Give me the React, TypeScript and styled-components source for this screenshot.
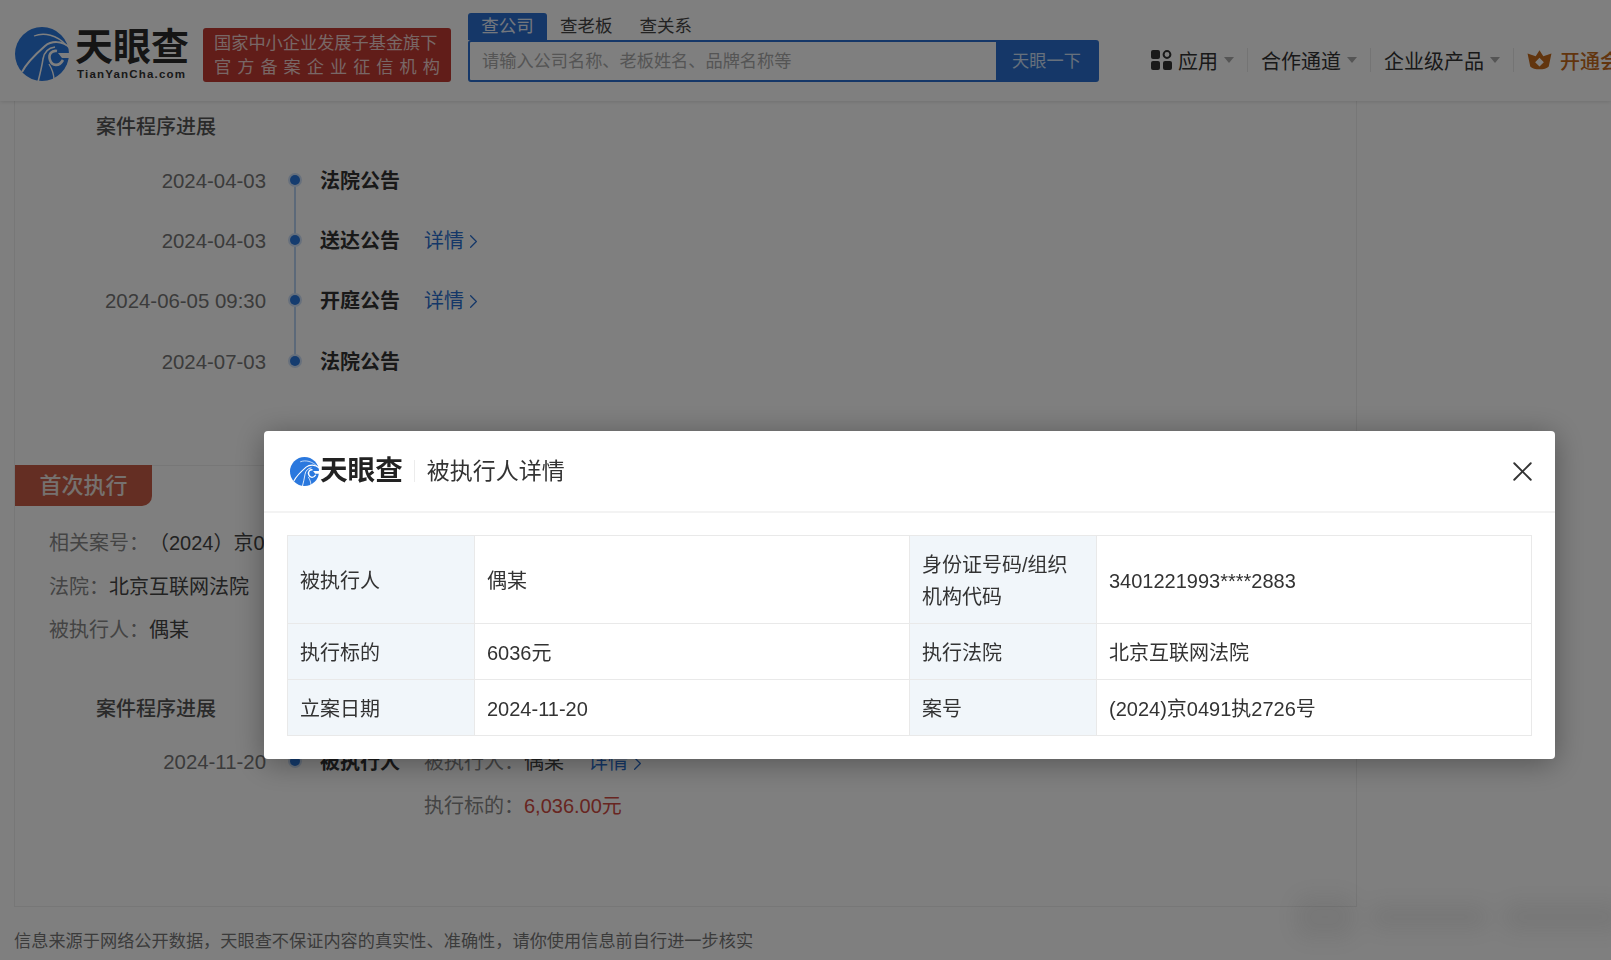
import styled, { createGlobalStyle } from 'styled-components'
import { ChevronRight, X } from 'lucide-react'

const SANS = `"Liberation Sans", "Noto Sans CJK SC", sans-serif`

const GlobalStyle = createGlobalStyle`
  html, body {
    margin: 0;
    padding: 0;
    height: 100%;
    overflow: hidden;
    background: #fff;
    font-family: ${SANS};
  }
`

const Swirl = ({ size }: { size: number }) => (
  <svg width={size} height={size} viewBox="0 0 54 54" fill="none">
    <circle cx="27" cy="27" r="27" fill="#2a78de" />
    <path d="M19 9C29 5 42 8 51 18" stroke="#fff" strokeWidth="1.3" />
    <path d="M55 21C47 13 36 14 30 19C22 26 12 35 7 45" stroke="#fff" strokeWidth="2" />
    <path d="M40 20C33 21 29 26 28 32C27 39 25 47 23 55" stroke="#fff" strokeWidth="1.6" />
    <path d="M48 33C44 40 37 39 35 33C33 27 37 23 42 24" stroke="#fff" strokeWidth="2.6" />
    <path d="M34 37C37 42 39 47 39 53" stroke="#fff" strokeWidth="1.4" />
    <path d="M43 26H55V31H47Z" fill="#fff" />
  </svg>
)

export default function App() {
  return (
    <>
      <GlobalStyle />
      <Page>
        <Header>
          <Logo>
            <Swirl size={54} />
            <Brand>
              <BrandName>天眼查</BrandName>
              <BrandUrl>TianYanCha.com</BrandUrl>
            </Brand>
          </Logo>
          <Badge>
            <div>国家中小企业发展子基金旗下</div>
            <BadgeSpread>
              {'官方备案企业征信机构'.split('').map((c, i) => (
                <span key={i}>{c}</span>
              ))}
            </BadgeSpread>
          </Badge>
          <Search>
            <Tabs>
              <Tab $active>查公司</Tab>
              <Tab>查老板</Tab>
              <Tab>查关系</Tab>
            </Tabs>
            <SearchBox>
              <SearchInput>请输入公司名称、老板姓名、品牌名称等</SearchInput>
              <SearchButton>天眼一下</SearchButton>
            </SearchBox>
          </Search>
          <Nav>
            <NavItem>
              <svg width="21" height="20" viewBox="0 0 21 20">
                <rect x="0" y="0" width="9" height="9" rx="2" fill="#333" />
                <circle cx="16" cy="4.5" r="3.4" fill="none" stroke="#333" strokeWidth="2" />
                <rect x="0" y="11" width="9" height="9" rx="2" fill="#333" />
                <rect x="12" y="11" width="9" height="9" rx="2" fill="#333" />
              </svg>
              <span>应用</span>
              <Caret />
            </NavItem>
            <NavItem>
              <span>合作通道</span>
              <Caret />
            </NavItem>
            <NavItem>
              <span>企业级产品</span>
              <Caret />
            </NavItem>
            <VipItem>
              <svg width="25" height="21" viewBox="0 0 23 19">
                <path
                  d="M11.5 0L15 5.5L22.5 3L20 15C17 18.5 6 18.5 3 15L.5 3L8 5.5ZM11.5 7L7.5 11L11.5 15L15.5 11Z"
                  fill="#c56a1c"
                  fillRule="evenodd"
                />
              </svg>
              <span>开通会员</span>
            </VipItem>
          </Nav>
        </Header>

        <Card>
          <Progress $top={11}>
            <ProgressTitle>案件程序进展</ProgressTitle>
            <Row>
              <DateText>2024-04-03</DateText>
              <Dot $line />
              <RowName>法院公告</RowName>
            </Row>
            <Row>
              <DateText>2024-04-03</DateText>
              <Dot $line />
              <RowName>送达公告</RowName>
              <Link>
                详情
                <ChevronRight size={23} strokeWidth={1.3} />
              </Link>
            </Row>
            <Row>
              <DateText>2024-06-05 09:30</DateText>
              <Dot $line />
              <RowName>开庭公告</RowName>
              <Link>
                详情
                <ChevronRight size={23} strokeWidth={1.3} />
              </Link>
            </Row>
            <Row>
              <DateText>2024-07-03</DateText>
              <Dot />
              <RowName>法院公告</RowName>
            </Row>
          </Progress>

          <CaseSection>
            <CaseTag>首次执行</CaseTag>
            <InfoList>
              <InfoLine>
                相关案号：<InfoValue $gap={10}>（2024）京0491执2726号</InfoValue>
              </InfoLine>
              <InfoLine>
                法院：<InfoValue>北京互联网法院</InfoValue>
              </InfoLine>
              <InfoLine>
                被执行人：<InfoValue>偶某</InfoValue>
              </InfoLine>
            </InfoList>
            <Progress $top={41}>
              <ProgressTitle>案件程序进展</ProgressTitle>
              <Row>
                <DateText>2024-11-20</DateText>
                <Dot />
                <RowName>被执行人</RowName>
                <div>
                  <DetailLine>
                    被执行人：<InfoValue>偶某</InfoValue>
                    <Link $inline>
                      详情
                      <ChevronRight size={23} strokeWidth={1.3} />
                    </Link>
                  </DetailLine>
                  <DetailLine>
                    执行标的：<Money>6,036.00元</Money>
                  </DetailLine>
                </div>
              </Row>
            </Progress>
          </CaseSection>
        </Card>

        <Disclaimer>信息来源于网络公开数据，天眼查不保证内容的真实性、准确性，请你使用信息前自行进一步核实</Disclaimer>
      </Page>

      <Overlay>
        <Modal>
          <ModalHeader>
            <Swirl size={29} />
            <ModalBrand>天眼查</ModalBrand>
            <ModalTitle>被执行人详情</ModalTitle>
            <CloseButton>
              <X size={33} strokeWidth={1.4} />
            </CloseButton>
          </ModalHeader>
          <ModalBody>
            <DetailGrid>
              <Cell $head>被执行人</Cell>
              <Cell>偶某</Cell>
              <Cell $head>身份证号码/组织机构代码</Cell>
              <Cell>3401221993****2883</Cell>
              <Cell $head>执行标的</Cell>
              <Cell>6036元</Cell>
              <Cell $head>执行法院</Cell>
              <Cell>北京互联网法院</Cell>
              <Cell $head>立案日期</Cell>
              <Cell>2024-11-20</Cell>
              <Cell $head>案号</Cell>
              <Cell>(2024)京0491执2726号</Cell>
            </DetailGrid>
          </ModalBody>
        </Modal>
      </Overlay>
      <Watermark>
        <WatermarkBlob $w={60} $h={44} />
        <WatermarkBlob $w={120} $h={26} />
        <WatermarkBlob $w={120} $h={30} />
      </Watermark>
    </>
  )
}

const Page = styled.div`
  width: 1611px;
  height: 960px;
  overflow: hidden;
  background: #fff;
`

const Header = styled.header`
  height: 101px;
  box-sizing: border-box;
  padding: 8px 0 0 15px;
  display: flex;
  align-items: flex-start;
  background: #fff;
  box-shadow: 0 1px 4px rgba(0, 0, 0, 0.12);
  overflow: hidden;
  position: relative;
`

const Logo = styled.div`
  display: flex;
  align-items: center;
  gap: 6px;
  margin-top: 19px;
  flex: none;
  width: 177px;
`

const Brand = styled.div`
  display: flex;
  flex-direction: column;
`

const BrandName = styled.div`
  font-size: 38px;
  line-height: 40px;
  font-weight: 700;
  color: #2b2b2b;
  white-space: nowrap;
`

const BrandUrl = styled.div`
  margin-left: 2px;
  font-size: 11.5px;
  line-height: 14px;
  font-weight: 700;
  letter-spacing: 1.2px;
  color: #333;
  white-space: nowrap;
`

const Badge = styled.div`
  flex: none;
  width: 248px;
  height: 54px;
  margin: 20px 0 0 11px;
  box-sizing: border-box;
  padding: 3px 11px 0;
  border-radius: 3px;
  background: #c23a33;
  color: #f0cfcc;
  font-size: 17.2px;
  line-height: 24px;
  white-space: nowrap;
`

const BadgeSpread = styled.div`
  display: flex;
  justify-content: space-between;
`

const Search = styled.div`
  flex: none;
  width: 631px;
  margin: 5px 0 0 17px;
`

const Tabs = styled.div`
  display: flex;
  height: 27px;
`

const Tab = styled.div<{ $active?: boolean }>`
  width: ${p => (p.$active ? '79px' : 'auto')};
  margin-right: ${p => (p.$active ? '13px' : '27px')};
  box-sizing: border-box;
  text-align: center;
  font-size: 17.5px;
  line-height: 27px;
  border-radius: 3px 3px 0 0;
  background: ${p => (p.$active ? '#2a6fd0' : 'transparent')};
  color: ${p => (p.$active ? '#e8eefb' : '#444')};
`

const SearchBox = styled.div`
  display: flex;
  height: 42px;
  width: 631px;
  box-sizing: border-box;
  border: 2px solid #2a6fd0;
  border-radius: 3px;
  background: #fff;
`

const SearchInput = styled.div`
  flex: 1;
  padding-left: 12px;
  font-size: 17.2px;
  line-height: 38px;
  color: #aaa;
`

const SearchButton = styled.div`
  width: 101px;
  text-align: center;
  background: #2a6fd0;
  color: #cfe0f8;
  font-size: 17.2px;
  line-height: 38px;
`

const Nav = styled.nav`
  flex: none;
  display: flex;
  align-items: center;
  margin: 37px 0 0 52px;
  height: 30px;
  white-space: nowrap;
`

const NavItem = styled.div`
  display: flex;
  align-items: center;
  gap: 6px;
  height: 24px;
  padding-right: 13px;
  margin-right: 13px;
  border-right: 1px solid #e8e8e8;
  font-size: 20px;
  color: #333;
`

const Caret = styled.i`
  width: 0;
  height: 0;
  border-left: 5.5px solid transparent;
  border-right: 5.5px solid transparent;
  border-top: 6px solid #aaa;
`

const VipItem = styled.div`
  display: flex;
  align-items: center;
  gap: 8px;
  font-size: 20px;
  font-weight: 500;
  color: #c56a1c;
`

const Card = styled.main`
  width: 1343px;
  height: 806px;
  margin-left: 14px;
  box-sizing: border-box;
  border: 1px solid #eee;
  border-top: 0;
  background: #fff;
`

const Progress = styled.section<{ $top: number }>`
  padding: ${p => p.$top}px 0 0 81px;
`

const ProgressTitle = styled.h4`
  margin: 0 0 9.5px;
  font-size: 20px;
  line-height: 30px;
  font-weight: 500;
  color: #555;
`

const Row = styled.div`
  display: flex;
  align-items: flex-start;
  box-sizing: border-box;
  min-height: 60.4px;
  padding: 8px 0;
  font-size: 20px;
  line-height: 43.4px;
`

const DateText = styled.div`
  width: 170px;
  flex: none;
  text-align: right;
  color: #777;
  font-size: 20.4px;
`

const Dot = styled.i<{ $line?: boolean }>`
  flex: none;
  position: relative;
  width: 10px;
  height: 10px;
  margin: 15px 20px 0 24px;
  border-radius: 50%;
  background: #2a78de;
  box-shadow: 0 0 0 2px #cfe0f8;

  &::after {
    content: '';
    display: ${p => (p.$line ? 'block' : 'none')};
    position: absolute;
    left: 4px;
    top: 12px;
    width: 2px;
    height: 49px;
    background: #b9d2f2;
  }
`

const RowName = styled.div`
  width: 104px;
  flex: none;
  font-weight: 700;
  color: #333;
`

const Link = styled.span<{ $inline?: boolean }>`
  display: inline-flex;
  align-items: center;
  margin-left: ${p => (p.$inline ? '24px' : '0')};
  color: #2a6fd0;

  svg {
    margin-left: -2px;
  }
`

const CaseSection = styled.section`
  margin-top: 72px;
  border-top: 1px solid #eee;
`

const CaseTag = styled.div`
  width: 137px;
  height: 41px;
  margin-top: -1px;
  text-align: center;
  font-size: 22px;
  line-height: 41px;
  font-weight: 500;
  color: #ece2de;
  background: #c85c46;
  border-radius: 0 0 10px 0;
`

const InfoList = styled.div`
  padding: 16px 0 0 34px;
`

const InfoLine = styled.div`
  font-size: 20px;
  line-height: 43.6px;
  color: #888;
`

const InfoValue = styled.span<{ $gap?: number }>`
  color: #444;
  margin-left: ${p => p.$gap ?? 0}px;
`

const DetailLine = styled.div`
  color: #888;
  white-space: nowrap;
`

const Money = styled.span`
  color: #d04a42;
`

const Disclaimer = styled.footer`
  margin: 24px 0 0 14px;
  font-size: 17.2px;
  line-height: 20px;
  color: #777;
`

const Overlay = styled.div`
  position: fixed;
  inset: 0;
  background: rgba(0, 0, 0, 0.5);
  display: flex;
  align-items: flex-start;
  padding: 431px 0 0 264px;
`

const Modal = styled.div`
  width: 1291px;
  height: 328px;
  background: #fff;
  border-radius: 4px;
  box-shadow: 0 4px 30px rgba(0, 0, 0, 0.35);
`

const ModalHeader = styled.div`
  display: flex;
  align-items: center;
  height: 82px;
  box-sizing: border-box;
  padding: 0 16px 0 26px;
  border-bottom: 2px solid #f3f3f3;
`

const ModalBrand = styled.div`
  margin-left: 1px;
  padding-right: 11px;
  font-size: 27.6px;
  font-weight: 700;
  line-height: 32px;
  color: #222;
`

const ModalTitle = styled.div`
  flex: 1;
  padding-left: 12px;
  font-size: 23px;
  line-height: 22px;
  color: #333;
  border-left: 1px solid #ececec;
`

const CloseButton = styled.div`
  display: flex;
  color: #333;
`

const ModalBody = styled.div`
  padding: 22px 23px;
`

const DetailGrid = styled.div`
  display: grid;
  grid-template-columns: 187px 435px 187px 435px;
  grid-template-rows: 88px 56px 56px;
  border-top: 1px solid #e9e9e9;
  border-left: 1px solid #e9e9e9;
`

const Cell = styled.div<{ $head?: boolean }>`
  display: flex;
  align-items: center;
  box-sizing: border-box;
  padding: 2px 12px 0;
  border-right: 1px solid #e9e9e9;
  border-bottom: 1px solid #e9e9e9;
  font-size: 20px;
  line-height: 32px;
  color: #333;
  background: ${p => (p.$head ? '#f1f6fa' : '#fff')};
`

const Watermark = styled.div`
  position: fixed;
  left: 1295px;
  top: 895px;
  display: flex;
  align-items: center;
  gap: 14px;
  filter: blur(10px);
  opacity: 0.12;
`

const WatermarkBlob = styled.div<{ $w: number; $h: number }>`
  width: ${p => p.$w}px;
  height: ${p => p.$h}px;
  border-radius: 12px;
  background: #444;
`
